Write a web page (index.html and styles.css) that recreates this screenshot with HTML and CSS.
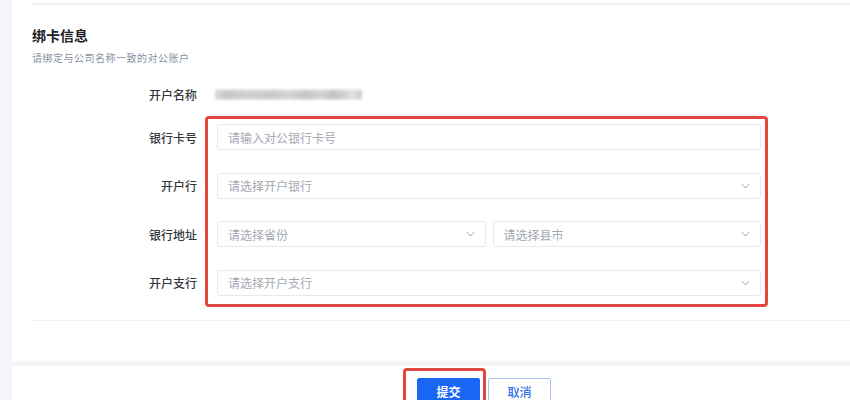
FILE: index.html
```html
<!DOCTYPE html>
<html lang="zh-CN">
<head>
<meta charset="utf-8">
<link rel="stylesheet" href="styles.css">
</head>
<body>
<div class="page">
  <section class="card">
    <div class="top-line"></div>
    <h2 class="title">绑卡信息</h2>
    <p class="subtitle">请绑定与公司名称一致的对公账户</p>
    <div class="form">
      <div class="row row-name">
        <div class="label">开户名称</div>
        <div class="control"><div class="blurred"></div></div>
      </div>
      <div class="row">
        <div class="label">银行卡号</div>
        <div class="control"><div class="input"><span class="ph">请输入对公银行卡号</span></div></div>
      </div>
      <div class="row">
        <div class="label">开户行</div>
        <div class="control"><div class="input select"><span class="ph">请选择开户银行</span><svg class="chev" viewBox="0 0 10 6"><path d="M1 1l4 4 4-4"/></svg></div></div>
      </div>
      <div class="row">
        <div class="label">银行地址</div>
        <div class="control split">
          <div class="input select"><span class="ph">请选择省份</span><svg class="chev" viewBox="0 0 10 6"><path d="M1 1l4 4 4-4"/></svg></div>
          <div class="input select"><span class="ph">请选择县市</span><svg class="chev" viewBox="0 0 10 6"><path d="M1 1l4 4 4-4"/></svg></div>
        </div>
      </div>
      <div class="row">
        <div class="label">开户支行</div>
        <div class="control"><div class="input select"><span class="ph">请选择开户支行</span><svg class="chev" viewBox="0 0 10 6"><path d="M1 1l4 4 4-4"/></svg></div></div>
      </div>
      <div class="highlight form-mark"></div>
    </div>
    <div class="bottom-line"></div>
  </section>
  <footer class="actions">
    <div class="btns">
      <button class="btn primary">提交</button>
      <button class="btn secondary">取消</button>
      <div class="highlight btn-mark"></div>
    </div>
  </footer>
</div>
</body>
</html>
```

FILE: styles.css
```css
* { box-sizing: border-box; }
html, body { margin: 0; padding: 0; }
body {
  background: #f4f5f8;
  width: 850px;
  height: 400px;
  overflow: hidden;
  font-family: "Noto Sans CJK SC", "Noto Sans", sans-serif;
}
.page {
  padding-left: 12px;
}
.card {
  background: #fff;
  height: 361px;
  padding-left: 20px;
  padding-top: 3px;
}
.top-line {
  height: 2px;
  background: #f0f1f3;
}
.title {
  margin: 20px 0 0;
  font-size: 14px;
  line-height: 20px;
  font-weight: 700;
  color: #1d2129;
}
.subtitle {
  margin: 5px 0 0;
  font-size: 10px;
  letter-spacing: 0.5px;
  line-height: 16px;
  color: #86909c;
}
.form {
  position: relative;
  margin-top: 15px;
  display: flex;
  flex-direction: column;
  gap: 22.5px;
}
.row {
  display: flex;
  align-items: center;
  height: 26px;
}
.row-name { margin-bottom: -5.5px; }
.label {
  width: 165px;
  text-align: right;
  font-size: 12px;
  font-weight: 500;
  color: #34373c;
}
.control {
  margin-left: 20px;
  width: 544px;
  height: 26px;
  display: flex;
  align-items: center;
}
.control.split { gap: 7px; }
.blurred {
  margin-left: -2px;
  width: 147px;
  height: 11px;
  background:
    linear-gradient(180deg, rgba(255,255,255,0.55) 0%, rgba(255,255,255,0) 35%, rgba(255,255,255,0) 65%, rgba(255,255,255,0.35) 100%),
    linear-gradient(90deg, #d9d9db 0%, #c4c5c7 8%, #cfd0d2 22%, #c6c7c9 38%, #d2d3d5 50%, #c2c3c5 62%, #d4d4d6 72%, #bfc0c2 80%, #c9cacc 86%, #e0e0e2 93%, #cdced0 100%);
  filter: blur(0.8px);
}
.input {
  flex: 1;
  height: 26px;
  border: 1px solid #e7e8ec;
  border-radius: 3px;
  display: flex;
  align-items: center;
  padding: 0 10px;
  background: #fff;
}
.ph {
  font-size: 12px;
  color: #a3a8b1;
  flex: 1;
}
.chev {
  width: 9px;
  height: 6px;
  fill: none;
  stroke: #8a9099;
  stroke-width: 1;
}
.highlight {
  position: absolute;
  border: 3px solid #e2463f;
  border-radius: 4px;
  pointer-events: none;
}
.form-mark {
  left: 173px;
  top: 35px;
  width: 563px;
  height: 191px;
}
.bottom-line {
  margin-top: 24px;
  height: 1px;
  background: #eef0f2;
}
.actions {
  margin-top: 5px;
  background: #fff;
  height: 34px;
  padding-top: 12px;
  padding-left: 405px;
}
.btns {
  position: relative;
  display: flex;
  gap: 8px;
}
.btn {
  width: 63px;
  height: 30px;
  border-radius: 2px;
  font-family: inherit;
  font-size: 12px;
  font-weight: 700;
  padding: 0 0 4px;
  display: flex;
  align-items: center;
  justify-content: center;
}
.primary {
  background: #1a66f5;
  color: #fff;
  border: 1px solid #1a66f5;
}
.secondary {
  background: #fff;
  color: #2d6fe8;
  border: 1px solid #a8c3f3;
  font-weight: 500;
}
.btn-mark {
  left: -14px;
  top: -10px;
  width: 83px;
  height: 50px;
}
```
